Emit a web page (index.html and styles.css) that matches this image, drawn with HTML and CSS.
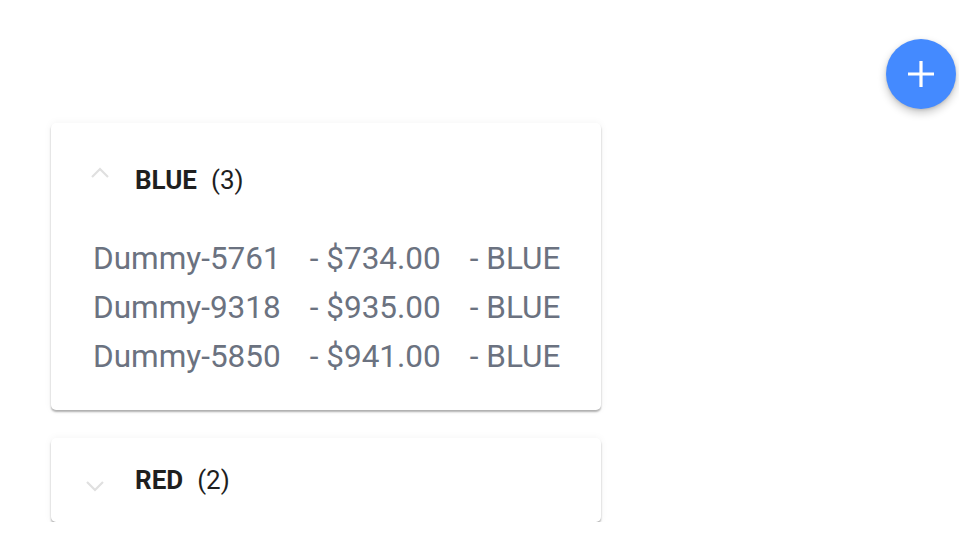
FILE: index.html
```html
<!DOCTYPE html>
<html>
<head>
<meta charset="utf-8">
<link rel="stylesheet" href="styles.css">
</head>
<body>
<button class="fab" aria-label="add">
  <svg width="28" height="28" viewBox="0 0 28 28"><path d="M14 1v26M1 14h26" stroke="#fff" stroke-width="3.2" fill="none"/></svg>
</button>
<main class="list">
  <section class="card open">
    <header class="head">
      <svg class="chev" width="20" height="12" viewBox="0 0 20 12"><path d="M2 10l8-8 8 8" stroke="#e0e0e0" stroke-width="2.2" fill="none"/></svg>
      <span class="name">BLUE</span><span class="count">(3)</span>
    </header>
    <div class="rows">
      <div class="row"><span class="c1">Dummy-5761</span><span class="c2">- $734.00</span><span class="c3">- BLUE</span></div>
      <div class="row"><span class="c1">Dummy-9318</span><span class="c2">- $935.00</span><span class="c3">- BLUE</span></div>
      <div class="row"><span class="c1">Dummy-5850</span><span class="c2">- $941.00</span><span class="c3">- BLUE</span></div>
    </div>
  </section>
  <section class="card closed">
    <header class="head">
      <svg class="chev" width="20" height="12" viewBox="0 0 20 12"><path d="M2 2l8 8 8-8" stroke="#e0e0e0" stroke-width="2.2" fill="none"/></svg>
      <span class="name">RED</span><span class="count">(2)</span>
    </header>
  </section>
</main>
</body>
</html>
```
FILE: styles.css
```css
html, body {
  margin: 0;
  padding: 0;
  background: #fff;
  font-family: Roboto, "Liberation Sans", sans-serif;
}
.fab {
  position: absolute;
  top: 39px;
  right: 3px;
  width: 70px;
  height: 70px;
  border-radius: 50%;
  border: none;
  padding: 0;
  background: #448aff;
  box-shadow: 0 4px 8px rgba(0,0,0,0.22), 0 1px 3px rgba(0,0,0,0.12);
  display: flex;
  align-items: center;
  justify-content: center;
}
.list {
  display: flex;
  flex-direction: column;
  gap: 28px;
  padding: 123px 0 0 51px;
  width: 550px;
}
.card {
  background: #fff;
  border-radius: 5px;
  box-shadow: 0 2px 2px rgba(0,0,0,0.3), 0 0 8px rgba(0,0,0,0.05);
}
.head {
  display: flex;
  align-items: center;
  box-sizing: border-box;
  color: #1f1f1f;
  font-size: 26px;
}
.open .head {
  height: 111px;
  padding: 3px 0 0 39px;
}
.open .chev {
  margin-bottom: 14px;
  margin-right: 25px;
}
.closed .head {
  height: 84px;
  padding-left: 34px;
}
.closed .chev {
  margin-top: 12px;
  margin-right: 30px;
}
.name {
  font-weight: 700;
  margin-right: 14px;
}
.count {
  font-weight: 400;
}
.rows {
  padding: 0 0 29px 42px;
  display: flex;
  flex-direction: column;
}
.row {
  display: flex;
  gap: 29px;
  height: 49px;
  line-height: 49px;
  font-size: 31.5px;
  color: #6b7280;
}
```
